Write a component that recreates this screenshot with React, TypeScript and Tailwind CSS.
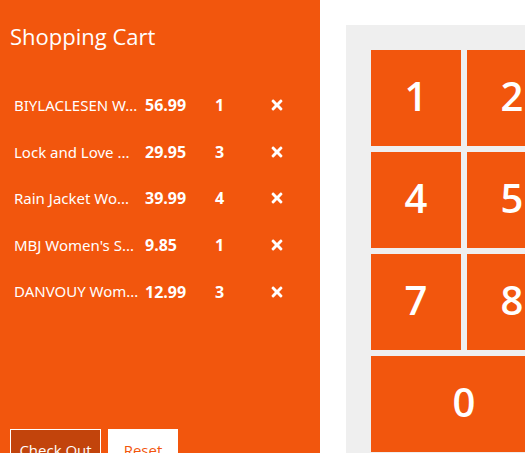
import { FaTimes } from "react-icons/fa";

const items = [
  { name: "BIYLACLESEN W...", price: "56.99", quantity: 1 },
  { name: "Lock and Love ...", price: "29.95", quantity: 3 },
  { name: "Rain Jacket Wo...", price: "39.99", quantity: 4 },
  { name: "MBJ Women's S...", price: "9.85", quantity: 1 },
  { name: "DANVOUY Wom...", price: "12.99", quantity: 3 },
];

const keys = ["1", "2", "4", "5", "7", "8"];

function Cart() {
  return (
    <aside className="flex w-80 shrink-0 flex-col bg-[#f2560d] px-[10px] pt-[18px] text-white">
      <h1 className="text-[22px] leading-9">Shopping Cart</h1>
      <table className="mt-7 h-[233px] w-full shrink-0 table-fixed text-left">
        <colgroup>
          <col className="w-[135px]" />
          <col className="w-[70px]" />
          <col className="w-[50px]" />
          <col />
        </colgroup>
        <tbody>
          {items.map((item) => (
            <tr key={item.name}>
              <td className="whitespace-nowrap pl-1 font-['Noto_Sans',sans-serif] text-[15px]">
                {item.name}
              </td>
              <td className="font-bold">{item.price}</td>
              <td className="font-bold">{item.quantity}</td>
              <td>
                <button
                  type="button"
                  aria-label={`Remove ${item.name}`}
                  className="flex size-6 items-center justify-center"
                >
                  <FaTimes className="size-4" />
                </button>
              </td>
            </tr>
          ))}
        </tbody>
      </table>
      <div className="mt-[114px] flex shrink-0 gap-[7px] text-[15px]">
        <button type="button" className="h-[42px] w-[91px] shrink-0 border border-white bg-[#c2440c]">
          Check Out
        </button>
        <button type="button" className="h-[42px] w-[70px] shrink-0 bg-white text-[#f2560d]">
          Reset
        </button>
      </div>
    </aside>
  );
}

function Keypad() {
  return (
    <section className="grid shrink-0 grid-cols-[90px_90px] content-start gap-[6px] bg-[#efefef] p-[25px]">
      {keys.map((key) => (
        <button
          key={key}
          type="button"
          className="h-24 bg-[#f2560d] pb-1 text-[40px] font-semibold leading-none text-white"
        >
          {key}
        </button>
      ))}
      <button
        type="button"
        className="col-span-2 h-24 bg-[#f2560d] pb-1 text-[40px] font-semibold leading-none text-white"
      >
        0
      </button>
    </section>
  );
}

export default function App() {
  return (
    <div className="flex h-screen overflow-hidden bg-white font-['Open_Sans',sans-serif] text-base">
      <Cart />
      <main className="flex min-w-0 flex-1 pl-[26px] pt-[25px]">
        <Keypad />
      </main>
    </div>
  );
}
